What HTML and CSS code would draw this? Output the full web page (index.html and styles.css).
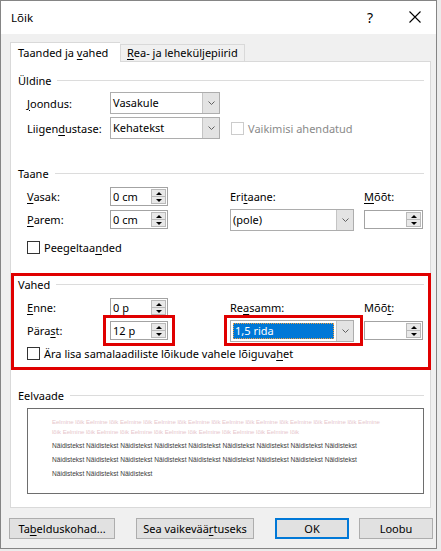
FILE: index.html
```html
<!DOCTYPE html>
<html>
	<head>
		<meta charset="utf-8">
		<title>Lõik</title>
		<link rel="stylesheet" href="styles.css">
	</head>
	<body>
	    <div class="dialog">
            <div class="titlebar">
                <span class="title">Lõik</span>
                <span class="help">?</span>
                <span class="close">
                    <svg width="12" height="12" viewBox="0 0 12 12"><path d="M0.5 0.5L11.5 11.5M11.5 0.5L0.5 11.5" stroke="#000" stroke-width="1.1" fill="none"/></svg>
                </span>
            </div>
            <div class="content">
                <div class="tabs">
                    <div class="tab current">Taanded ja <u>v</u>ahed</div>
                    <div class="tab"><u>R</u>ea- ja leheküljepiirid</div>
                </div>
                <div class="panel">
                    <!-- Üldine -->
                    <div class="group-title g-general"><span>Üldine</span><i></i></div>
                    <div class="row row-first">
                        <span class="label"><u>J</u>oondus:</span>
                        <div class="combo combo-short"><span class="value">Vasakule</span><span class="drop"><svg width="7" height="4" viewBox="0 0 7 4"><polyline points="0.5,0.5 3.5,3.5 6.5,0.5" fill="none" stroke="#606060"/></svg></span></div>
                    </div>
                    <div class="row row-second">
                        <span class="label">Liigen<u>d</u>ustase:</span>
                        <div class="combo combo-short"><span class="value">Kehatekst</span><span class="drop"><svg width="7" height="4" viewBox="0 0 7 4"><polyline points="0.5,0.5 3.5,3.5 6.5,0.5" fill="none" stroke="#606060"/></svg></span></div>
                        <span class="check disabled"><span class="box"></span>Vaikimisi ahendatud</span>
                    </div>

                    <!-- Taane -->
                    <div class="group-title g-indent"><span>Taane</span><i></i></div>
                    <div class="grid">
                        <span class="label"><u>V</u>asak:</span>
                        <div class="spin"><span class="value">0 cm</span><span class="arrows"><b class="up"></b><b class="down"></b></span></div>
                        <span class="label">Eri<u>t</u>aane:</span>
                        <span class="label"><u>M</u>õõt:</span>

                        <span class="label"><u>P</u>arem:</span>
                        <div class="spin"><span class="value">0 cm</span><span class="arrows"><b class="up"></b><b class="down"></b></span></div>
                        <div class="combo combo-wide"><span class="value">(pole)</span><span class="drop"><svg width="7" height="4" viewBox="0 0 7 4"><polyline points="0.5,0.5 3.5,3.5 6.5,0.5" fill="none" stroke="#606060"/></svg></span></div>
                        <div class="spin spin-wide"><span class="value"></span><span class="arrows"><b class="up"></b><b class="down"></b></span></div>
                    </div>
                    <div class="row row-check">
                        <span class="check"><span class="box"></span>Peegeltaa<u>n</u>ded</span>
                    </div>

                    <!-- Vahed -->
                    <div class="group-title g-spacing"><span>Vahed</span><i></i></div>
                    <div class="grid">
                        <span class="label"><u>E</u>nne:</span>
                        <div class="spin"><span class="value">0 p</span><span class="arrows"><b class="up"></b><b class="down"></b></span></div>
                        <span class="label">Re<u>a</u>samm:</span>
                        <span class="label">Mõõ<u>t</u>:</span>

                        <span class="label">Pära<u>s</u>t:</span>
                        <div class="spin"><span class="value">12 p</span><span class="arrows"><b class="up"></b><b class="down"></b></span></div>
                        <div class="combo combo-wide focus"><span class="value"><em>1,5 rida</em></span><span class="drop"><svg width="7" height="4" viewBox="0 0 7 4"><polyline points="0.5,0.5 3.5,3.5 6.5,0.5" fill="none" stroke="#606060"/></svg></span></div>
                        <div class="spin spin-wide"><span class="value"></span><span class="arrows"><b class="up"></b><b class="down"></b></span></div>
                    </div>
                    <div class="row row-check2">
                        <span class="check"><span class="box"></span>Ära lisa samalaadiliste lõikude vahele lõiguva<u>h</u>et</span>
                    </div>

                    <!-- Eelvaade -->
                    <div class="group-title g-preview"><span>Eelvaade</span><i></i></div>
                    <div class="preview">
                        <div class="prev">Eelmine lõik Eelmine lõik Eelmine lõik Eelmine lõik Eelmine lõik Eelmine lõik Eelmine lõik Eelmine lõik Eelmine lõik Eelmine</div>
                        <div class="prev">lõik Eelmine lõik Eelmine lõik Eelmine lõik Eelmine lõik Eelmine lõik Eelmine lõik Eelmine lõik</div>
                        <div class="sample first">Näidistekst Näidistekst Näidistekst Näidistekst Näidistekst Näidistekst Näidistekst Näidistekst Näidistekst</div>
                        <div class="sample">Näidistekst Näidistekst Näidistekst Näidistekst Näidistekst Näidistekst Näidistekst Näidistekst Näidistekst</div>
                        <div class="sample">Näidistekst Näidistekst Näidistekst</div>
                    </div>
                </div>
                <div class="buttons">
                    <div class="btn btn-tabs">Ta<u>b</u>elduskohad...</div>
                    <div class="btn btn-default">Sea vaikevää<u>r</u>tuseks</div>
                    <div class="btn btn-ok">OK</div>
                    <div class="btn btn-cancel">Loobu</div>
                </div>
            </div>
            <!-- punased märgistused -->
            <div class="mark mark-group"></div>
            <div class="mark mark-after"></div>
            <div class="mark mark-line"></div>
        </div>
	</body>
</html>
```

FILE: styles.css
```css
*{
    padding: 0;
    margin: 0;
    box-sizing: border-box;
}
html,body{
    width:100%;
    height:100%;
}
body {
    background:#ececec;
    font-family:"Noto Sans","DejaVu Sans",sans-serif;
    font-size:11px;
    color:#000;
}
u {
    text-decoration:underline;
    text-underline-offset:2px;
}
.dialog {
    position:relative;
    width:437px;
    height:549px;
    border:1px solid #858585;
    background:#f0f0f0;
}
.titlebar {
    height:33px;
    background:#fff;
    display:flex;
    align-items:center;
    padding-left:10px;
}
.title {
    font-size:11.5px;
    flex:1;
}
.help {
    font-size:14px;
    width:38px;
}
.close {
    width:31px;
    display:flex;
    align-items:center;
    padding-left:4px;
    padding-bottom:1px;
}
.content {
    padding:8px 0 0 9px;
}
.tabs {
    display:flex;
    align-items:flex-end;
    height:19px;
}
.tab {
    height:17px;
    padding:0 4px 0 6px;
    border:1px solid #d9d9d9;
    border-bottom:none;
    line-height:15px;
    background:#f0f0f0;
    white-space:nowrap;
}
.tab.current {
    position:relative;
    z-index:1;
    height:20px;
    margin-bottom:-1px;
    width:110px;
    padding:0 0 0 7px;
    line-height:19px;
    background:#fff;
    border-right:none;
}
.tab + .tab {
    width:125px;
}
.panel {
    width:421px;
    height:447px;
    background:#fff;
    border:1px solid #d9d9d9;
    padding:0 6px 0 7px;
}
.group-title {
    display:flex;
    align-items:center;
    height:16px;
}
.group-title i {
    flex:1;
    height:1px;
    background:#dcdcdc;
    margin-left:6px;
}
.g-general { margin-top:10px; }
.g-indent { margin-top:26px; }
.g-spacing { margin-top:18px; }
.g-preview { margin-top:23px; }
.row {
    display:flex;
    align-items:center;
    height:22px;
    padding-left:9px;
}
.row-first { margin-top:4px; }
.row-second { margin-top:3px; }
.row-check { margin-top:5px; }
.row .label {
    width:83px;
}
.grid {
    display:grid;
    grid-template-columns:83px 120px 134px 59px;
    grid-auto-rows:23px;
    align-items:center;
    padding-left:9px;
    margin-top:4px;
}
/* combo */
.combo {
    display:flex;
    height:22px;
    border:1px solid #adadad;
    background:#fff;
}
.combo-short { width:110px; }
.combo-wide { width:124px; }
.combo .value {
    flex:1;
    padding-left:2px;
    line-height:20px;
}
.combo .drop {
    width:17px;
    background:#e3e3e3;
    border-left:1px solid #c4c4c4;
    display:flex;
    align-items:center;
    justify-content:center;
}
.combo.focus .value {
    padding:2px;
    line-height:16px;
}
.combo.focus em {
    display:block;
    font-style:normal;
    height:16px;
    padding-left:2px;
    background:#0078d7;
    color:#fff;
    outline:1px dotted #f0a040;
    outline-offset:-1px;
}
/* spin */
.spin {
    display:flex;
    width:58px;
    height:19px;
    border:1px solid #a3a3a3;
    background:#fff;
}
.spin-wide { width:59px; }
.spin .value {
    flex:1;
    padding-left:2px;
    line-height:17px;
}
.spin .arrows {
    width:15px;
    margin:1px 1px 1px 0;
    display:flex;
    flex-direction:column;
    border:1px solid #b9b9b9;
    background:#e8e8e8;
}
.spin .arrows b {
    flex:1;
    display:flex;
    align-items:center;
    justify-content:center;
}
.spin .arrows b.up {
    border-bottom:1px solid #b9b9b9;
}
.spin .arrows b::after {
    content:"";
    border-left:3px solid transparent;
    border-right:3px solid transparent;
}
.spin .arrows b.up::after { border-bottom:3px solid #000; }
.spin .arrows b.down::after { border-top:3px solid #000; }
/* checkbox */
.check {
    display:flex;
    align-items:center;
}
.check .box {
    width:13px;
    height:13px;
    border:1px solid #333;
    background:#fff;
    margin-right:4px;
}
.check.disabled {
    margin-left:11px;
    color:#8a8a8a;
}
.check.disabled .box {
    border-color:#cccccc;
}
/* preview */
.preview {
    margin:5px 0 0 9px;
    width:397px;
    height:86px;
    border:1px solid #6e6e6e;
    padding:8px 0 0 24px;
    font-family:"Liberation Sans",Arial,sans-serif;
    white-space:nowrap;
}
.prev {
    font-size:6px;
    line-height:10px;
    color:#e6c6cc;
}
.sample {
    font-size:6.6px;
    line-height:14px;
    color:#3c3c3c;
}
.sample.first {
    margin-top:2px;
}
/* buttons */
.buttons {
    display:flex;
    margin:10px 0 0 -1px;
}
.btn {
    height:21px;
    line-height:19px;
    text-align:center;
    background:#e1e1e1;
    border:1px solid #adadad;
}
.btn-tabs { width:106px; }
.btn-default { width:118px; margin-left:21px; }
.btn-ok { width:74px; margin-left:21px; border:2px solid #0078d7; line-height:17px; }
.btn-cancel { width:74px; margin-left:10px; }
/* red marks */
.mark {
    position:absolute;
    border:3px solid #e00000;
}
.mark-group { left:10px; top:272px; width:420px; height:97px; }
.mark-after { left:102px; top:314px; width:72px; height:31px; }
.mark-line { left:223px; top:314px; width:139px; height:31px; }
```
